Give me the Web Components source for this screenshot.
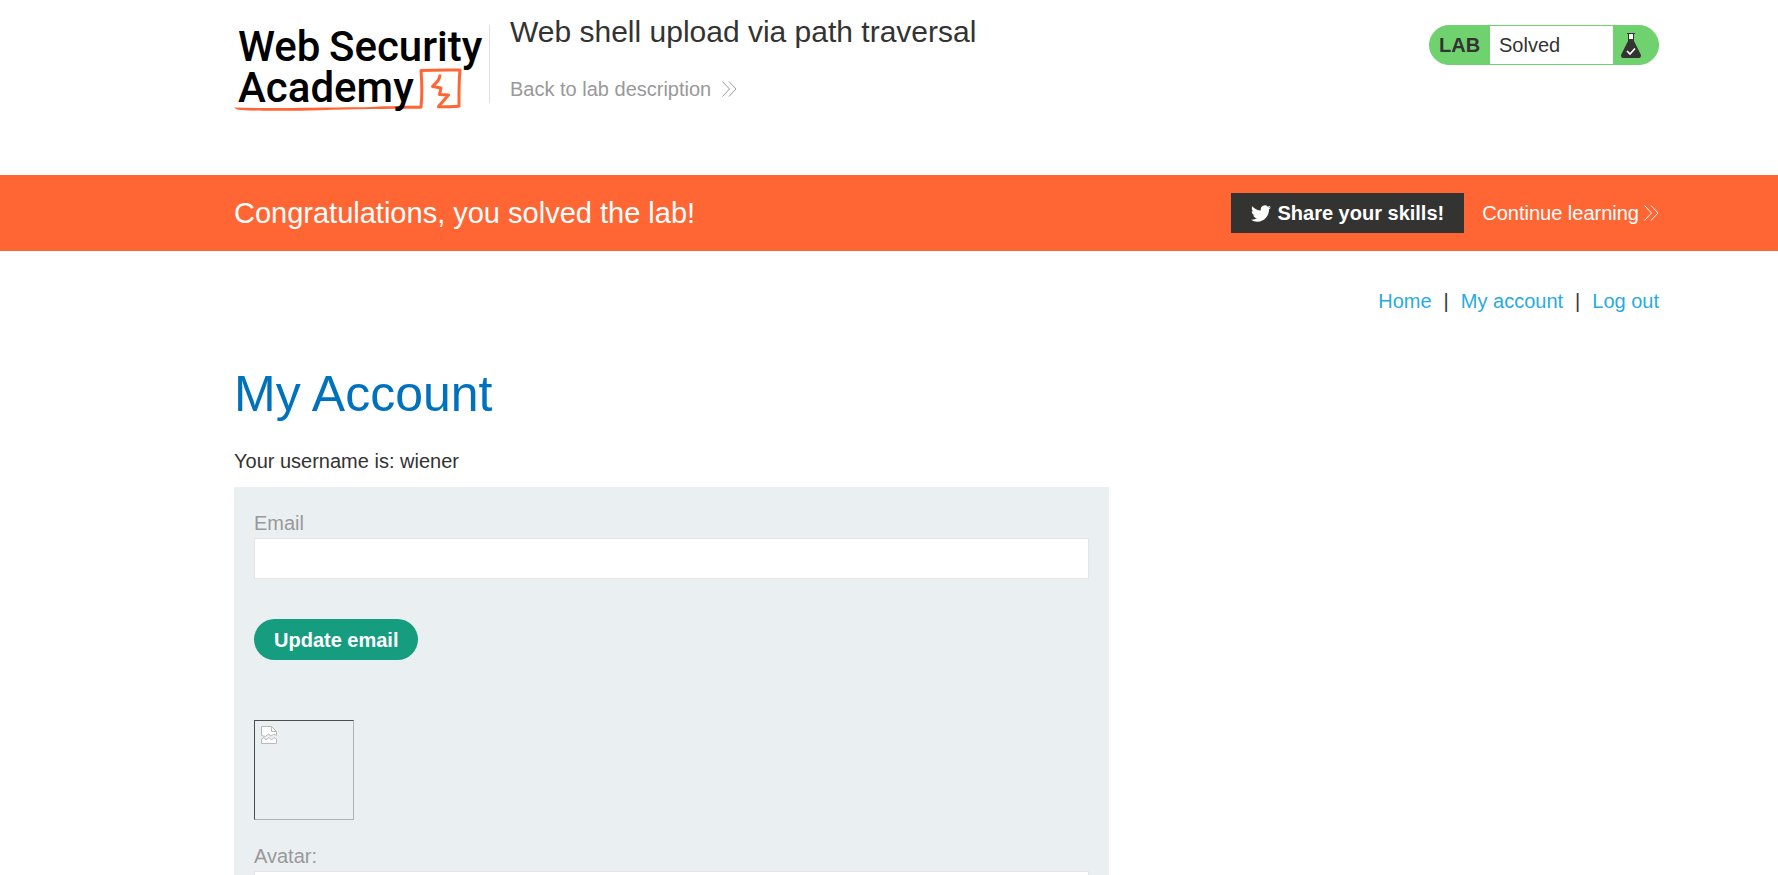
<!DOCTYPE html>
<html lang="en">
<head>
<meta charset="utf-8">
<meta name="viewport" content="width=device-width, initial-scale=1">
<title>Web shell upload via path traversal</title>
<style>
  html { height: 100%; }
  body {
    margin: 0; height: 100%; overflow: hidden; background: #fff; color: #333332;
    font: 20px/24px "Liberation Sans", Arial, sans-serif;
    --gutter-left: 234px; --gutter-right: 119px;
    --orange: #ff6633; --ink: #333332; --grey: #999999;
  }
</style>
</head>
<body>
<lab-header>
  <span slot="title">Web shell upload via path traversal</span>
  <lab-status slot="status">Solved</lab-status>
</lab-header>
<solved-banner>Congratulations, you solved the lab!</solved-banner>
<main>
  <account-nav></account-nav>
  <account-page username="wiener"></account-page>
</main>

<script>
const define = (name, html, setup) => {
  const template = document.createElement('template');
  template.innerHTML = html;
  customElements.define(name, class extends HTMLElement {
    constructor() {
      super();
      this.attachShadow({ mode: 'open' }).append(template.content.cloneNode(true));
    }
    connectedCallback() { if (setup) setup(this); }
  });
};

define('double-chevron', `
  <style>:host { display: inline-flex; } svg { display: block; }</style>
  <svg width="15" height="16" viewBox="0 0 15 16" fill="none" stroke="currentColor" aria-hidden="true">
    <path d="M0.5 0.5L7.5 8L0.5 15.5M7 0.5L14 8L7 15.5"/>
  </svg>`);

define('academy-logo', `
  <style>
    :host { display: block; }
    svg { display: block; overflow: visible; }
    text { font-family: Roboto, sans-serif; font-weight: 500; font-size: 42px; fill: #000; }
  </style>
  <svg width="254" height="96" viewBox="0 0 254 96" role="img" aria-label="Web Security Academy">
    <path fill="#ff6633" d="M0 82.5C40 84 90 82 130 82.200C155 81 172 80.500 186 80.700V83.800C150 83.500 110 84.500 75 85.500C45 86 15 86.200 3 84.500Z"/>
    <path fill="none" stroke="#ff6633" stroke-width="3" stroke-linejoin="round" stroke-linecap="round" d="M187 82.200C188.500 68 188 58 187 45.500C200 44.800 212 44.800 226 45C224.800 57 225 69 225 81.200C218 81.600 211 82 204.500 81.800"/>
    <path fill="none" stroke="#ff6633" stroke-width="3" stroke-linejoin="round" d="M206 49.500C206 54 204 56 198.500 61.500L207 63L205.500 69.500L214.500 70L204.500 81.500"/>
    <text x="4" y="36">Web</text>
    <text x="95" y="36">Security</text>
    <text x="4" y="77">Academy</text>
  </svg>`);

define('lab-header', `
  <style>
    :host { display: flex; align-items: flex-start; padding: 25px var(--gutter-right) 0 var(--gutter-left); height: 150px; }
    .info { flex: 1; height: 78px; margin-left: 1px; border-left: 1px solid #e0e0e0; padding-left: 20px; }
    h2 { margin: -11px 0 0; font-size: 30px; line-height: 36px; font-weight: 400; }
    a { display: inline-flex; align-items: center; gap: 11px; margin-top: 27px; color: var(--grey); text-decoration: none; }
  </style>
  <academy-logo></academy-logo>
  <div class="info">
    <h2><slot name="title"></slot></h2>
    <a href="#lab">Back to lab description<double-chevron></double-chevron></a>
  </div>
  <slot name="status"></slot>`);

define('lab-status', `
  <style>
    :host { display: flex; box-sizing: border-box; width: 230px; height: 40px; border: 1px solid #70d26f; border-radius: 20px; background: #70d26f; overflow: hidden; }
    b, .value { line-height: 38px; }
    b { width: 60px; padding-left: 9px; box-sizing: border-box; }
    .value { flex: 1; background: #fff; padding-left: 9px; }
    svg { margin: 7px 17px 0 8px; }
  </style>
  <b>LAB</b><span class="value"><slot></slot></span>
  <svg width="20" height="26" viewBox="0 0 20 26" aria-hidden="true">
    <path fill="#333332" d="M6 0H14V1H13V8L20 22Q20 25 18 25H2Q0 25 0 22L7 8V1H6Z"/>
    <path fill="#fff" d="M8 1H12V6H8Z"/>
    <path fill="none" stroke="#fff" stroke-width="1.700" d="M6 18L9 21L14 15.500"/>
  </svg>`);

define('solved-banner', `
  <style>
    :host { display: flex; align-items: center; height: 76px; padding: 0 var(--gutter-right) 0 var(--gutter-left); background: var(--orange); color: #fff; }
    h4 { flex: 1; margin: 0; font-size: 29px; line-height: 36px; font-weight: 400; }
    button { display: flex; align-items: center; gap: 6px; height: 40px; padding: 0 20px; border: 0; background: var(--ink); color: #fff; font: bold 20px/24px "Liberation Sans", Arial, sans-serif; }
    a { display: flex; align-items: center; gap: 5px; margin-left: 18px; color: #fff; text-decoration: none; }
  </style>
  <h4><slot></slot></h4>
  <button type="button">
    <svg width="20" height="17" viewBox="0 2 24 20" fill="#fff" aria-hidden="true"><path d="M23.954 4.569a10 10 0 0 1-2.825.775 4.958 4.958 0 0 0 2.163-2.723c-.951.555-2.005.959-3.127 1.184a4.920 4.920 0 0 0-8.384 4.482C7.691 8.094 4.066 6.130 1.640 3.161a4.822 4.822 0 0 0-.666 2.475c0 1.710.870 3.213 2.188 4.096a4.904 4.904 0 0 1-2.228-.616v.061a4.923 4.923 0 0 0 3.946 4.827 4.996 4.996 0 0 1-2.212.085 4.937 4.937 0 0 0 4.604 3.417 9.868 9.868 0 0 1-6.102 2.105c-.390 0-.779-.023-1.170-.067a13.995 13.995 0 0 0 7.557 2.209c9.054 0 13.999-7.496 13.999-13.986 0-.209 0-.420-.015-.630a9.936 9.936 0 0 0 2.460-2.548z"/></svg>
    Share your skills!
  </button>
  <a href="#learn">Continue learning<double-chevron></double-chevron></a>`);

define('account-nav', `
  <style>
    :host { display: block; padding: 38px var(--gutter-right) 0 var(--gutter-left); }
    nav { display: flex; justify-content: flex-end; gap: 12px; }
    a { color: #29abe2; text-decoration: none; }
  </style>
  <nav><a href="#home">Home</a><span>|</span><a href="#account">My account</a><span>|</span><a href="#logout">Log out</a></nav>`);

define('form-field', `
  <style>
    :host { display: block; }
    label { display: block; color: var(--grey); margin-bottom: 3px; }
    input { display: block; box-sizing: border-box; width: 100%; height: 41px; margin: 0; padding: 8px; border: 1px solid #e4e4e4; background: #fff; font: inherit; color: inherit; }
    input:focus { outline: none; }
  </style>
  <label for="field"></label><input id="field">`, el => {
    el.shadowRoot.querySelector('label').textContent = el.getAttribute('label');
    el.shadowRoot.querySelector('input').type = el.getAttribute('type');
  });

define('avatar-image', `
  <style>
    :host { display: block; box-sizing: border-box; width: 100px; height: 100px; border: 1px solid; border-color: #4b4c4d #b0b2b3 #b0b2b3 #4b4c4d; padding: 5px 6px; }
    svg { display: block; }
  </style>
  <svg width="16" height="18" viewBox="0 0 16 18" role="img" aria-label="Avatar">
    <path fill="#fff" stroke="#b8b8b8" d="M.5 9.500V.5H10.500L15.500 5.500V9.500L13 8L10 10L7.500 8L4.500 10.500Z"/>
    <path fill="none" stroke="#b8b8b8" d="M10.500 .5V5.500H15.500"/>
    <path fill="#fff" stroke="#b8b8b8" d="M.5 17.500V13L3 11.500L5 14L8 11.500L10.500 14L13 11.500L15.500 13V17.500Z"/>
  </svg>`);

define('account-page', `
  <style>
    :host { display: block; padding: 51px var(--gutter-right) 0 var(--gutter-left); }
    h1 { margin: 0; color: #0071bd; font-size: 50px; line-height: 60px; font-weight: 400; }
    p { margin: 25px 0 14px; }
    .panel { box-sizing: border-box; max-width: 875px; padding: 24px 20px; background: #eaeff2; }
    button { display: block; height: 41px; margin-top: 40px; padding: 0 20px; border: 0; border-radius: 21px; background: #169c7f; color: #fff; font: bold 20px/24px "Liberation Sans", Arial, sans-serif; }
    avatar-image { margin: 60px 0 24px; }
  </style>
  <h1>My Account</h1>
  <p>Your username is: <span id="user"></span></p>
  <div class="panel">
    <form>
      <form-field label="Email" type="email"></form-field>
      <button type="button">Update email</button>
    </form>
    <form>
      <avatar-image></avatar-image>
      <form-field label="Avatar:" type="file"></form-field>
    </form>
  </div>`, el => { el.shadowRoot.getElementById('user').textContent = el.getAttribute('username'); });
</script>
</body>
</html>
